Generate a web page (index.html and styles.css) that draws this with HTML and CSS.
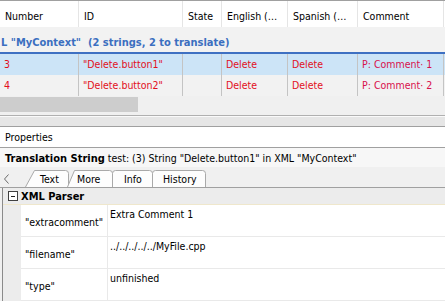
FILE: index.html
```html
<!DOCTYPE html>
<html>
<head>
<meta charset="utf-8">
<link rel="stylesheet" href="styles.css">
</head>
<body>
<div class="app">
  <div class="topline"></div>
  <div class="grid">
    <div class="hdr">
      <div class="hc">Number</div>
      <div class="hc">ID</div>
      <div class="hc">State</div>
      <div class="hc">English (…</div>
      <div class="hc">Spanish (…</div>
      <div class="hc">Comment</div>
      <div class="hc last"></div>
    </div>
    <div class="group">L "MyContext"&nbsp;&nbsp;(2 strings, 2 to translate)</div>
    <div class="groupline"></div>
    <div class="row sel">
      <div class="dc">3</div>
      <div class="dc">"Delete.button1"</div>
      <div class="dc"></div>
      <div class="dc">Delete</div>
      <div class="dc">Delete</div>
      <div class="dc cm">P: Comment· 1</div>
      <div class="dc last"></div>
    </div>
    <div class="row">
      <div class="dc">4</div>
      <div class="dc">"Delete.button2"</div>
      <div class="dc"></div>
      <div class="dc">Delete</div>
      <div class="dc">Delete</div>
      <div class="dc cm">P: Comment· 2</div>
      <div class="dc last"></div>
    </div>
  </div>
  <div class="hscroll"><div class="thumb"></div></div>
  <div class="splitter"><div class="sp-a"></div><div class="sp-b"></div><div class="sp-c"></div><div class="sp-d"></div></div>
  <div class="props-title">Properties</div>
  <div class="ts-row"><b class="tsb">Translation String</b> test: (3) String "Delete.button1" in XML "MyContext"</div>
  <div class="tabbar">
    <svg class="arrow" width="6" height="10" viewBox="0 0 6 10"><path d="M4.5 0.5 L0.5 5 L4.5 9.5" fill="none" stroke="#6a6a6a" stroke-width="1"/></svg>
    <div class="tab t-text">
      <svg class="shape" width="45" height="17" viewBox="0 0 45 17"><path d="M0.5 17 L9.5 0.5 H40.5 Q43.5 0.5 43.5 3.5 V17" fill="#fdfdfd" stroke="#a9a9a9"/></svg>
      <span class="tl">Text</span>
    </div>
    <div class="tab t-more">
      <svg class="shape" width="46" height="17" viewBox="0 0 46 17"><path d="M0.5 17 L7.5 0.5 H42.5 Q45.5 0.5 45.5 3.5 V17" fill="#fdfdfd" stroke="#a9a9a9"/></svg>
      <span class="tl">More</span>
    </div>
    <div class="tab t-info">
      <svg class="shape" width="41" height="17" viewBox="0 0 41 17"><path d="M0.5 17 V3.5 Q0.5 0.5 3.5 0.5 H37.5 Q40.5 0.5 40.5 3.5 V17" fill="#fdfdfd" stroke="#a9a9a9"/></svg>
      <span class="tl">Info</span>
    </div>
    <div class="tab t-hist">
      <svg class="shape" width="54" height="17" viewBox="0 0 54 17"><path d="M0.5 17 V3.5 Q0.5 0.5 3.5 0.5 H50.5 Q53.5 0.5 53.5 3.5 V17" fill="#fdfdfd" stroke="#a9a9a9"/></svg>
      <span class="tl">History</span>
    </div>
  </div>
  <div class="content">
    <div class="pgroup">
      <span class="minus"></span>
      <b class="pgb">XML Parser</b>
    </div>
    <div class="prow">
      <div class="gut"></div>
      <div class="pname">"extracomment"</div>
      <div class="pval">Extra Comment 1</div>
    </div>
    <div class="prow">
      <div class="gut"></div>
      <div class="pname">"filename"</div>
      <div class="pval">../../../../../MyFile.cpp</div>
    </div>
    <div class="prow">
      <div class="gut"></div>
      <div class="pname">"type"</div>
      <div class="pval">unfinished</div>
    </div>
  </div>
</div>
</body>
</html>
```
FILE: styles.css
```css
html, body {
  margin: 0;
  padding: 0;
}
body {
  width: 445px;
  height: 301px;
  overflow: hidden;
  background: #f0f0f0;
  font-family: "DejaVu Sans Condensed", "DejaVu Sans", sans-serif;
  font-stretch: condensed;
  font-size: 10.5px;
  color: #000;
}
.app {
  display: flex;
  flex-direction: column;
  height: 301px;
}
.topline {
  height: 1px;
  background: #a0a0a0;
}
.hdr, .row {
  display: grid;
  grid-template-columns: 79px 104px 39px 66px 70px 86px 1fr;
}
.hdr {
  height: 26px;
  background: #fff;
}
.hc {
  box-sizing: border-box;
  border-right: 1px solid #e5e5e5;
  padding: 9px 0 0 5px;
  white-space: nowrap;
  overflow: hidden;
}
.hc.last, .dc.last {
  border-right: none;
}
.group {
  height: 25px;
  box-sizing: border-box;
  padding: 9px 0 0 1px;
  background: #f2f2f2;
  color: #3b6fc0;
  font-weight: bold;
  font-size: 11px;
  white-space: nowrap;
}
.groupline {
  height: 2px;
  background: #3e70c2;
}
.row {
  height: 21px;
  background: #f2f2f2;
  color: #e2101c;
}
.row.sel {
  background: #cce4f7;
}
.dc {
  box-sizing: border-box;
  border-right: 1px solid #c4c4c4;
  padding: 4px 0 0 4px;
  white-space: nowrap;
  overflow: hidden;
}
.dc.cm {
  color: #d8104c;
}
.hscroll {
  margin-top: 1px;
  height: 15px;
  background: #f0f0f0;
}
.thumb {
  width: 138px;
  height: 15px;
  background: #cdcdcd;
}
.splitter {
  display: flex;
  flex-direction: column;
}
.sp-a {
  height: 3px;
  background: #f0f0f0;
}
.sp-b {
  height: 1px;
  background: #b0b0b0;
}
.sp-c {
  height: 9px;
  background: #e6e6e6;
  border-top: 1px solid #fafafa;
}
.sp-d {
  height: 1px;
  background: #a0a0a0;
}
.props-title {
  box-sizing: border-box;
  background: #fff;
  padding: 4px 0 0 5px;
  border-bottom: 1px solid #a0a0a0;
  height: 21px;
}
.ts-row {
  height: 20px;
  box-sizing: border-box;
  background: #f7f7f7;
  padding: 4px 0 0 5px;
  white-space: nowrap;
}
.tsb {
  font-size: 11px;
}
.tabbar {
  height: 21px;
  box-sizing: border-box;
  border-bottom: 1px solid #a0a0a0;
  display: flex;
  align-items: flex-end;
  padding-left: 4px;
}
.arrow {
  align-self: center;
  margin-top: 3px;
  margin-right: 15px;
}
.tab {
  position: relative;
  height: 17px;
  display: flex;
  align-items: center;
}
.shape {
  position: absolute;
  left: 0;
  top: 0;
}
.tl {
  position: relative;
  padding-top: 1px;
}
.t-text {
  width: 45px;
}
.t-text .tl {
  margin-left: 15px;
}
.t-more {
  width: 46px;
  margin-left: -3px;
}
.t-more .tl {
  margin-left: 10px;
}
.t-info {
  width: 41px;
  margin-left: -1px;
}
.t-info .tl {
  margin-left: 12px;
}
.t-hist {
  width: 54px;
  margin-left: -1px;
}
.t-hist .tl {
  margin-left: 11px;
}
.content {
  flex: 1;
  margin-left: 2px;
  border-left: 1px solid #8a8a8a;
  background: #fff;
  display: flex;
  flex-direction: column;
}
.pgroup {
  height: 17px;
  box-sizing: border-box;
  background: #ececec;
  border-bottom: 1px solid #efe7cc;
  display: flex;
  align-items: center;
  padding-left: 5px;
}
.minus {
  width: 8px;
  height: 8px;
  border: 1px solid #404040;
  margin-right: 3px;
  position: relative;
  background: #fff;
}
.minus::after {
  content: "";
  position: absolute;
  left: 2px;
  right: 2px;
  top: 3.5px;
  height: 1px;
  background: #202020;
}
.pgb {
  font-size: 11px;
}
.prow {
  display: grid;
  grid-template-columns: 18px 87px 1fr;
  height: 32px;
  box-sizing: border-box;
}
.gut {
  background: #ececec;
}
.pname {
  border-bottom: 1px solid #e9e9e9;
  border-right: 1px solid #e9e9e9;
  padding: 11px 0 0 4px;
  white-space: nowrap;
}
.pval {
  border-bottom: 1px solid #e9e9e9;
  padding: 3px 0 0 2px;
  white-space: nowrap;
}
```
